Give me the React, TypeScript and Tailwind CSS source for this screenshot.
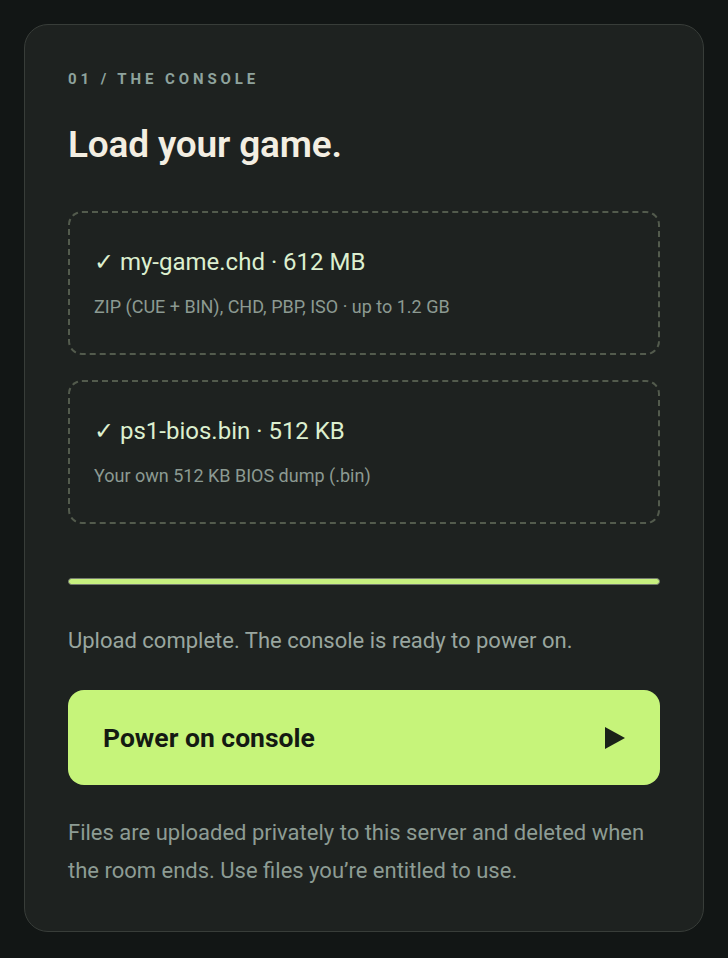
const files = [
  ["✓ my-game.chd · 612 MB", "ZIP (CUE + BIN), CHD, PBP, ISO · up to 1.2 GB"],
  ["✓ ps1-bios.bin · 512 KB", "Your own 512 KB BIOS dump (.bin)"],
] as const;

export default function App() {
  return (
    <main
      className="min-h-screen bg-[#121615] p-6"
      style={{ fontFamily: "Roboto, 'Noto Sans', sans-serif" }}
    >
      <section className="rounded-[24px] border border-[#383d39] bg-[#1e2220] px-[43px] pt-[44px] pb-[41px]">
        <p className="text-[15px] font-bold uppercase leading-5 tracking-[0.26em] text-[#8ea39d]">
          01 / The console
        </p>
        <h1 className="mt-[34px] text-[37px] font-semibold leading-[44px] tracking-[-0.005em] text-[#f3eee2]">
          Load your game.
        </h1>

        <div className="mt-[44px] flex flex-col gap-[25px]">
          {files.map(([name, hint]) => (
            <div
              key={name}
              className="flex h-[144px] flex-col justify-center rounded-[14px] border-2 border-dashed border-[#535b4d] px-[24px]"
            >
              <p className="text-[24px] leading-7 text-[#dcefcf]">{name}</p>
              <p className="mt-[19px] text-[18px] leading-6 text-[#8c9a92]">{hint}</p>
            </div>
          ))}
        </div>

        {/* progress: upload finished */}
        <div className="mt-[54px] h-[7px] rounded-full border-[1.5px] border-[#767c70] bg-[#c7f07f]" />

        <p className="mt-[42px] text-[22px] leading-7 text-[#99a69f]">
          Upload complete. The console is ready to power on.
        </p>

        <button
          type="button"
          className="mt-[35px] flex h-[95px] w-full items-center justify-between rounded-2xl bg-[#c6f47a] pl-[35px] pr-[35px] text-[#141a12]"
        >
          <span className="text-[26.5px] font-bold">Power on console</span>
          <svg width="20" height="22" viewBox="0 0 20 22" aria-hidden="true">
            <path d="M0 0 L20 11 L0 22 Z" fill="#1a2218" />
          </svg>
        </button>

        <p className="mt-[29px] text-[22px] leading-[38px] text-[#8d9c94]">
          Files are uploaded privately to this server and deleted when the room ends. Use files you’re entitled to use.
        </p>
      </section>
    </main>
  );
}
